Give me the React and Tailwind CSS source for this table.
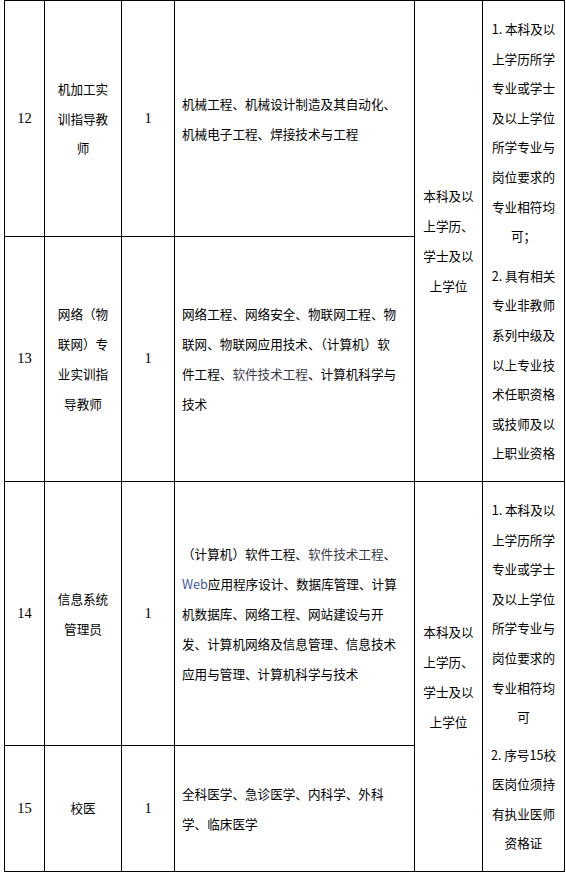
import React from 'react';

const cjk = { fontFamily: '"Noto Sans CJK SC", "Noto Sans", sans-serif' };

const Num = ({ children }) => (
    <span className="font-['Liberation_Serif',serif] text-[14.5px]">{children}</span>
);

const App = () => {
    const cell = 'border border-black align-middle';

    return (
        <div className="min-h-screen bg-white text-black" style={cjk}>
            <table className="ml-[4px] w-[560px] table-fixed border-collapse text-[12.6px]">
                <colgroup>
                    <col className="w-[40px]" />
                    <col className="w-[77px]" />
                    <col className="w-[53px]" />
                    <col className="w-[240px]" />
                    <col className="w-[68px]" />
                    <col className="w-[82px]" />
                </colgroup>
                <tbody>
                    <tr className="h-[236px]">
                        <td className={`${cell} text-center`}><Num>12</Num></td>
                        <td className={`${cell} text-center leading-[29.5px]`}>
                            机加工实<br />训指导教<br />师
                        </td>
                        <td className={`${cell} text-center`}><Num>1</Num></td>
                        <td className={`${cell} pl-[7px] leading-[30px] whitespace-nowrap`}>
                            机械工程、机械设计制造及其自动化、<br />机械电子工程、焊接技术与工程
                        </td>
                        <td rowSpan={2} className={`${cell} text-center leading-[30px]`}>
                            本科及以<br />上学历、<br />学士及以<br />上学位
                        </td>
                        <td rowSpan={2} className={`${cell} text-center leading-[29.6px] whitespace-nowrap`}>
                            <p>1. 本科及以<br />上学历所学<br />专业或学士<br />及以上学位<br />所学专业与<br />岗位要求的<br />专业相符均<br />可；</p>
                            <p className="mt-[10px]">2. 具有相关<br />专业非教师<br />系列中级及<br />以上专业技<br />术任职资格<br />或技师及以<br />上职业资格</p>
                        </td>
                    </tr>
                    <tr className="h-[245px]">
                        <td className={`${cell} text-center`}><Num>13</Num></td>
                        <td className={`${cell} text-center leading-[30px]`}>
                            网络（物<br />联网）专<br />业实训指<br />导教师
                        </td>
                        <td className={`${cell} text-center`}><Num>1</Num></td>
                        <td className={`${cell} pl-[7px] leading-[30px] whitespace-nowrap`}>
                            网络工程、网络安全、物联网工程、物<br />联网、物联网应用技术、（计算机）软<br />件工程、<span className="text-[#3a3a48]">软件技术工程</span>、计算机科学与<br />技术
                        </td>
                    </tr>
                    <tr className="h-[264px]">
                        <td className={`${cell} text-center`}><Num>14</Num></td>
                        <td className={`${cell} text-center leading-[30px]`}>
                            信息系统<br />管理员
                        </td>
                        <td className={`${cell} text-center`}><Num>1</Num></td>
                        <td className={`${cell} pl-[7px] leading-[30px] whitespace-nowrap`}>
                            （计算机）软件工程、<span className="text-[#3a3a48]">软件技术工程</span>、<br />
                            <span className="text-[#3d5c9e]">Web</span>应用程序设计、数据库管理、计算<br />
                            机数据库、网络工程、网站建设与开<br />
                            发、计算机网络及信息管理、信息技术<br />
                            应用与管理、计算机科学与技术
                        </td>
                        <td rowSpan={2} className={`${cell} text-center leading-[30px]`}>
                            本科及以<br />上学历、<br />学士及以<br />上学位
                        </td>
                        <td rowSpan={2} className={`${cell} text-center leading-[29.6px] whitespace-nowrap`}>
                            <p>1. 本科及以<br />上学历所学<br />专业或学士<br />及以上学位<br />所学专业与<br />岗位要求的<br />专业相符均<br />可</p>
                            <p className="mt-[8px]">2. 序号15校<br />医岗位须持<br />有执业医师<br />资格证</p>
                        </td>
                    </tr>
                    <tr className="h-[126px]">
                        <td className={`${cell} text-center`}><Num>15</Num></td>
                        <td className={`${cell} text-center`}>校医</td>
                        <td className={`${cell} text-center`}><Num>1</Num></td>
                        <td className={`${cell} pl-[7px] leading-[30px] whitespace-nowrap`}>
                            全科医学、急诊医学、内科学、外科<br />学、临床医学
                        </td>
                    </tr>
                </tbody>
            </table>
        </div>
    );
};

export default App;
